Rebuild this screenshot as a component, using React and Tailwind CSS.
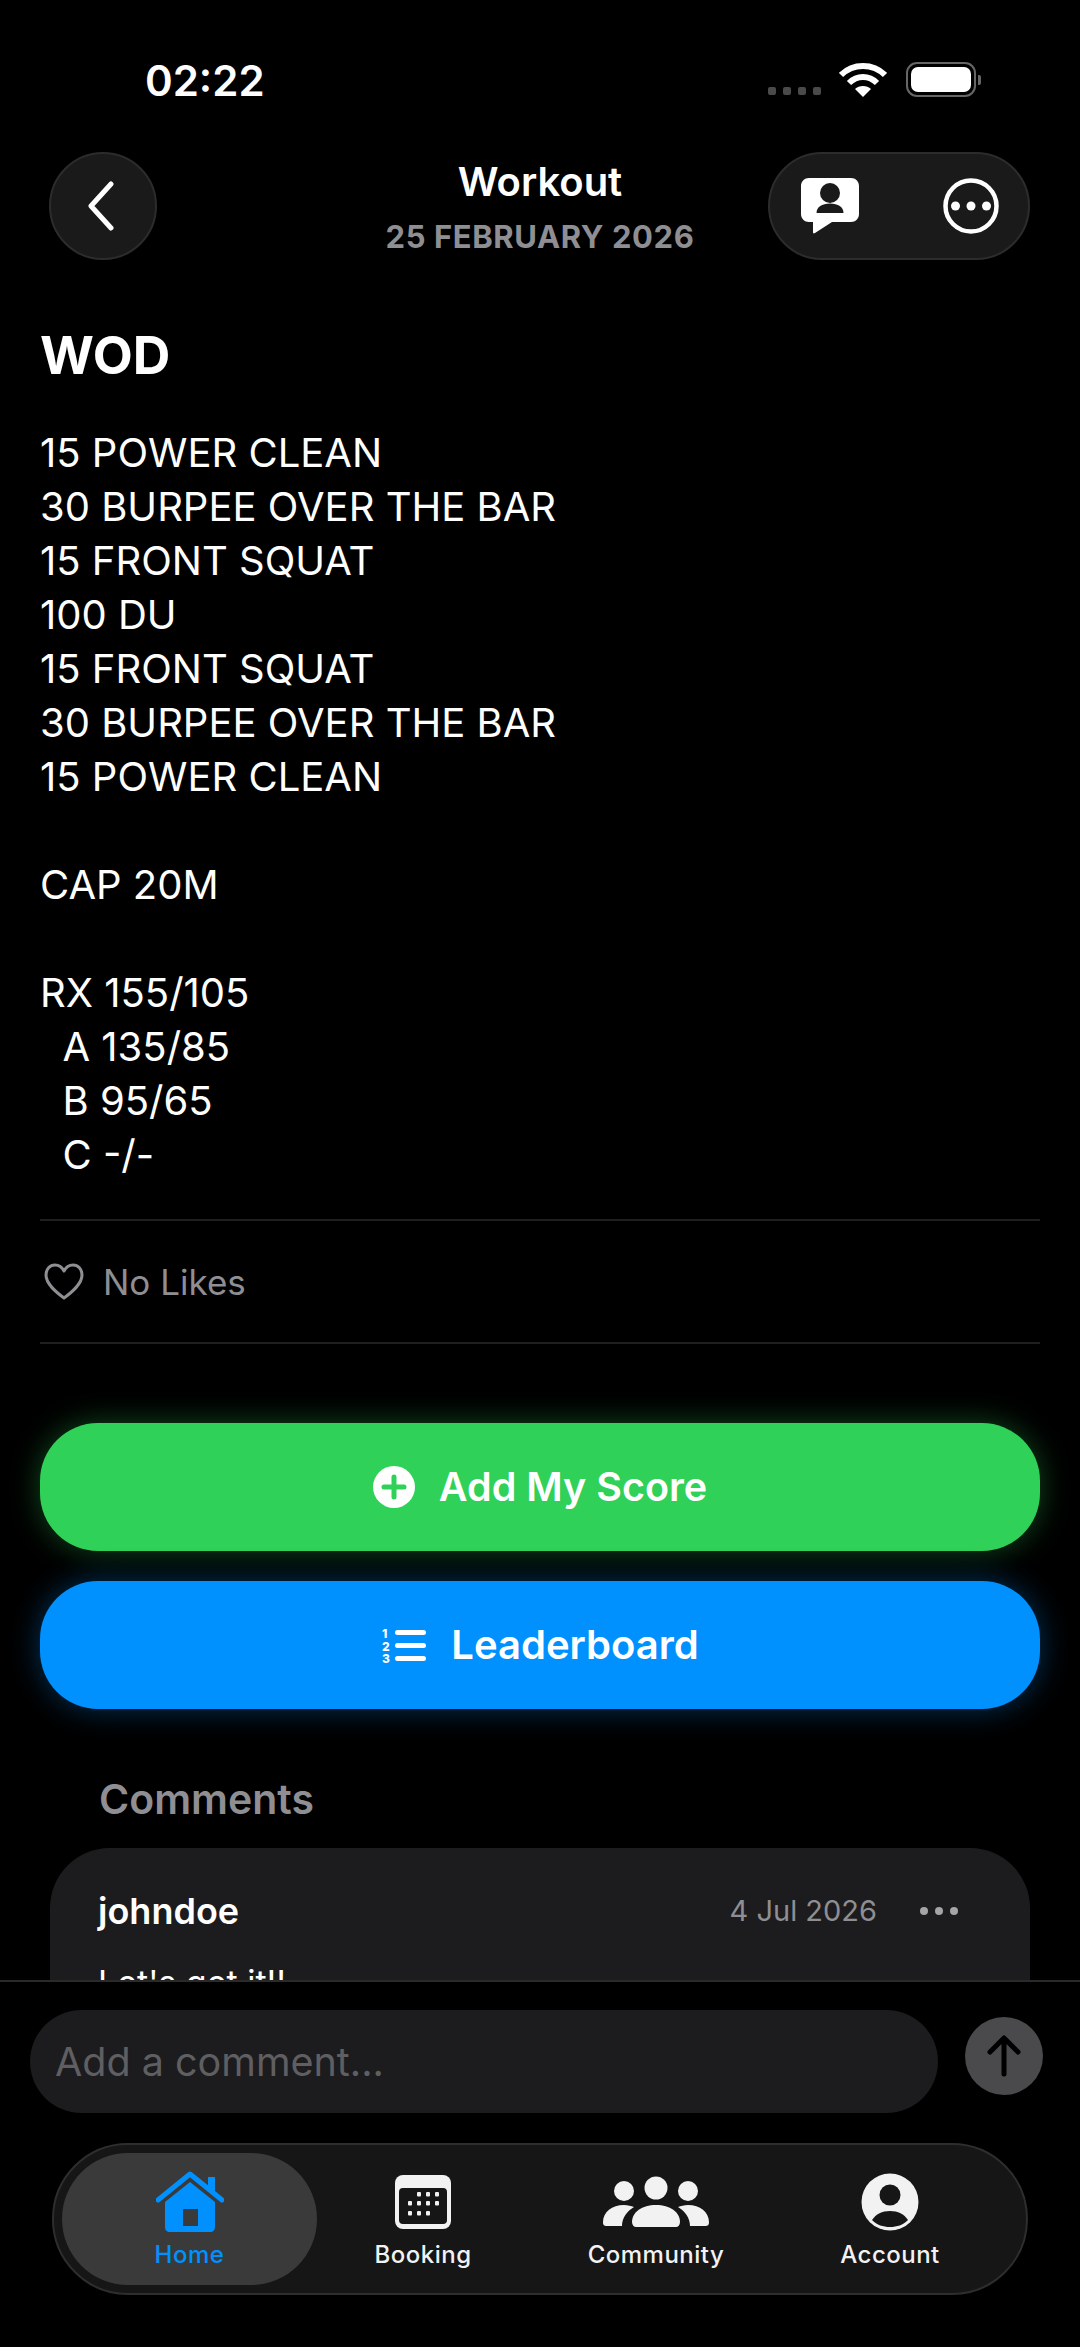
import React from 'react';

const workoutLines = [
  '15 POWER CLEAN',
  '30 BURPEE OVER THE BAR',
  '15 FRONT SQUAT',
  '100 DU',
  '15 FRONT SQUAT',
  '30 BURPEE OVER THE BAR',
  '15 POWER CLEAN',
  '',
  'CAP 20M',
  '',
  'RX 155/105',
  '  A 135/85',
  '  B 95/65',
  '  C -/-',
];

function StatusBar() {
  return (
    <div className="flex h-[152px] shrink-0 items-start justify-between pt-[56px] pl-[145px] pr-[99px]">
      <span className="text-[42px] leading-[50px] font-semibold text-white">02:22</span>
      <div className="flex items-start pt-[6px]">
        <div className="mt-[25px] flex gap-[7px]">
          <span className="h-[8px] w-[8px] rounded-[2px] bg-[#4a4a4a]" />
          <span className="h-[8px] w-[8px] rounded-[2px] bg-[#4a4a4a]" />
          <span className="h-[8px] w-[8px] rounded-[2px] bg-[#4a4a4a]" />
          <span className="h-[8px] w-[8px] rounded-[2px] bg-[#4a4a4a]" />
        </div>
        <svg className="ml-[18px]" width="48" height="35" viewBox="0 0 48 35" fill="none">
          <path d="M2 13C14 1 34 1 46 13" stroke="#fff" strokeWidth="6" />
          <path d="M10 21C18 13 30 13 38 21" stroke="#fff" strokeWidth="6" />
          <path d="M16 27C20 23 28 23 32 27L24 35Z" fill="#fff" />
        </svg>
        <div className="ml-[19px] flex items-center">
          <div className="h-[35px] w-[70px] rounded-[11px] border-[2px] border-[#666] p-[3px]">
            <div className="h-full w-full rounded-[7px] bg-white" />
          </div>
          <div className="ml-[2px] h-[10px] w-[3px] rounded-r-[2px] bg-[#666]" />
        </div>
      </div>
    </div>
  );
}

function Header() {
  return (
    <div className="relative flex h-[108px] shrink-0 items-center justify-between pl-[49px] pr-[50px]">
      <div className="flex h-[108px] w-[108px] items-center justify-center rounded-full border-[2px] border-[#2c2c2c] bg-[#1a1a1a] pr-[4px]">
        <svg width="30" height="50" viewBox="0 0 30 50" fill="none">
          <path d="M25 3L5 25L25 47" stroke="#fff" strokeWidth="5" strokeLinecap="round" strokeLinejoin="round" />
        </svg>
      </div>
      <div className="absolute left-0 right-0 top-0 flex flex-col items-center">
        <span className="text-[40px] leading-[60px] font-semibold text-white">Workout</span>
        <span className="mt-[3px] text-[31px] leading-[44px] font-bold tracking-[0.6px] text-[#8e8e93]">25 FEBRUARY 2026</span>
      </div>
      <div className="flex h-[108px] w-[262px] items-center justify-between rounded-[54px] border-[2px] border-[#2c2c2c] bg-[#1a1a1a] pl-[30px] pr-[29px]">
        <svg width="60" height="58" viewBox="0 0 60 58" fill="none">
          <path d="M9 1H51C55.500 1 59 4.500 59 9V37C59 41.500 55.500 45 51 45H32L15 56C13.500 57 13 56 13 55V45H9C4.500 45 1 41.500 1 37V9C1 4.500 4.500 1 9 1Z" fill="#fff" />
          <circle cx="30" cy="16" r="10" fill="#1a1a1a" />
          <path d="M16.500 36C16.500 30 22 26.500 30 26.500C38 26.500 43.500 30 43.500 36Z" fill="#1a1a1a" />
        </svg>
        <svg width="56" height="56" viewBox="0 0 56 56" fill="none">
          <circle cx="28" cy="28" r="25.500" stroke="#fff" strokeWidth="4.500" />
          <circle cx="12.500" cy="28" r="4.500" fill="#fff" />
          <circle cx="28" cy="28" r="4.500" fill="#fff" />
          <circle cx="43.500" cy="28" r="4.500" fill="#fff" />
        </svg>
      </div>
    </div>
  );
}

function Workout() {
  return (
    <div className="px-[40px]">
      <h1 className="mt-[66px] text-[52px] leading-[60px] font-bold text-white">WOD</h1>
      <div className="mt-[40px] whitespace-pre-wrap text-[40px] leading-[54px] font-normal text-white">
        {workoutLines.map((line, i) => (
          <div key={i} className="h-[54px]">{line}</div>
        ))}
      </div>
      <div className="mt-[37px] flex h-[125px] items-center gap-[19px] border-y-[2px] border-[#1f1f1f] pl-[4px]">
        <svg width="40" height="37" viewBox="0 0 40 37" fill="none">
          <path d="M20 35C12 29 2 21 2 12C2 6 6 2 11 2C15 2 18 4 20 8C22 4 25 2 29 2C34 2 38 6 38 12C38 21 28 29 20 35Z" stroke="#8e8e93" strokeWidth="3" strokeLinejoin="round" />
        </svg>
        <span className="text-[35px] leading-[44px] text-[#8e8e93]">No Likes</span>
      </div>
    </div>
  );
}

function Actions() {
  return (
    <div className="mt-[79px] flex flex-col gap-[30px] px-[40px]">
      <button className="flex h-[128px] items-center justify-center gap-[24px] rounded-[58px] bg-[#30d158] shadow-[0_0_30px_rgba(48,209,88,0.35)]">
        <svg width="42" height="42" viewBox="0 0 42 42">
          <circle cx="21" cy="21" r="21" fill="#fff" />
          <path d="M21 11V31M11 21H31" stroke="#30d158" strokeWidth="5" strokeLinecap="round" />
        </svg>
        <span className="text-[39.5px] leading-[50px] font-semibold text-white">Add My Score</span>
      </button>
      <button className="flex h-[128px] items-center justify-center gap-[24px] rounded-[58px] bg-[#0091ff] shadow-[0_0_30px_rgba(0,145,255,0.35)]">
        <svg width="46" height="40" viewBox="0 0 46 40" fill="#fff">
          <text x="1" y="13" fontFamily="Inter, sans-serif" fontSize="12" fontWeight="800">1</text>
          <text x="1" y="26" fontFamily="Inter, sans-serif" fontSize="12" fontWeight="800">2</text>
          <text x="1" y="38" fontFamily="Inter, sans-serif" fontSize="12" fontWeight="800">3</text>
          <rect x="14" y="5" width="31" height="5" rx="2.500" />
          <rect x="14" y="18" width="31" height="5" rx="2.500" />
          <rect x="14" y="31" width="31" height="5" rx="2.500" />
        </svg>
        <span className="text-[40px] leading-[50px] font-semibold text-white">Leaderboard</span>
      </button>
    </div>
  );
}

function Comments() {
  return (
    <div className="mt-[68px] px-[50px]">
      <h2 className="pl-[49px] text-[41px] leading-[44px] font-semibold text-[#8e8e93]">Comments</h2>
      <div className="mt-[27px] h-[300px] rounded-[60px] bg-[#1c1c1e] pl-[48px] pr-[72px] pt-[40px]">
        <div className="flex items-center justify-between">
          <span className="text-[36px] leading-[46px] font-semibold text-white">johndoe</span>
          <div className="flex items-center gap-[43px]">
            <span className="text-[29px] leading-[46px] text-[#8e8e93]">4 Jul 2026</span>
            <div className="flex gap-[7px]">
              <span className="h-[8px] w-[8px] rounded-full bg-[#a5a5a8]" />
              <span className="h-[8px] w-[8px] rounded-full bg-[#a5a5a8]" />
              <span className="h-[8px] w-[8px] rounded-full bg-[#a5a5a8]" />
            </div>
          </div>
        </div>
        <p className="mt-[27px] text-[34px] leading-[44px] text-white">Let's get it!!</p>
      </div>
    </div>
  );
}

function Composer() {
  return (
    <div className="flex h-[163px] shrink-0 items-start gap-[27px] border-t-[2px] border-[#2a2a2a] bg-black pl-[30px] pr-[37px] pt-[28px]">
      <div className="flex h-[103px] w-[908px] items-center rounded-[52px] bg-[#1c1c1e] pl-[25px]">
        <span className="text-[39.5px] leading-[50px] text-[#5f5f62]">Add a comment...</span>
      </div>
      <div className="mt-[7px] flex h-[78px] w-[78px] shrink-0 items-center justify-center rounded-full bg-[#4a4a4c]">
        <svg width="34" height="42" viewBox="0 0 34 42" fill="none">
          <path d="M17 39V3M3 17L17 3L31 17" stroke="#000" strokeWidth="5" strokeLinecap="round" strokeLinejoin="round" />
        </svg>
      </div>
    </div>
  );
}

function HomeIcon() {
  return (
    <svg width="68" height="62" viewBox="0 0 68 62" fill="none">
      <path d="M2 29L34 3L66 29" stroke="#0091ff" strokeWidth="5" strokeLinecap="round" strokeLinejoin="round" />
      <path d="M52 15V6H59V21Z" fill="#0091ff" />
      <path fillRule="evenodd" clipRule="evenodd" d="M34 11L59 31V56C59 59 57 61 54 61H14C11 61 9 59 9 56V31ZM27 38V55H42V38Z" fill="#0091ff" />
    </svg>
  );
}

function BookingIcon() {
  const dots = [
    [20, 17], [29, 17], [38, 17],
    [11, 26], [20, 26], [29, 26], [38, 26],
    [11, 36], [20, 36], [29, 36],
  ];
  return (
    <svg width="56" height="54" viewBox="0 0 56 54" fill="none">
      <rect width="56" height="54" rx="8" fill="#f2f2f2" />
      <rect x="4" y="13" width="48" height="36" rx="4" fill="#161616" />
      {dots.map(([x, y]) => (
        <rect key={`${x}-${y}`} x={x + 2} y={y} width="4" height="4.500" rx="1" fill="#f2f2f2" />
      ))}
    </svg>
  );
}

function CommunityIcon() {
  return (
    <svg width="106" height="52" viewBox="0 0 106 52" fill="#f2f2f2">
      <circle cx="21" cy="15" r="10" />
      <circle cx="53" cy="12" r="11.500" />
      <circle cx="85" cy="15" r="10" />
      <path d="M0 46C0 36 9 29 21 29C25 29 28 30 31 31C24 35 19 42 19 50H4C1 50 0 49 0 46Z" />
      <path d="M106 46C106 36 97 29 85 29C81 29 78 30 75 31C82 35 87 42 87 50H102C105 50 106 49 106 46Z" />
      <path d="M29 46C29 36 39 29 53 29C67 29 77 36 77 46C77 49 75 51 73 51H33C31 51 29 49 29 46Z" />
    </svg>
  );
}

function AccountIcon() {
  return (
    <svg width="58" height="58" viewBox="0 0 58 58" fill="none">
      <circle cx="29" cy="29" r="28.500" fill="#f2f2f2" />
      <circle cx="29" cy="22" r="10.500" fill="#161616" />
      <path d="M11 47C15 41 21 38 29 38C37 38 43 41 47 47C42 52 36 54 29 54C22 54 16 52 11 47Z" fill="#161616" />
    </svg>
  );
}

function TabItem({ icon, label, width, active }) {
  return (
    <div className={`flex h-[132px] shrink-0 flex-col items-center justify-start pt-[16px] ${width} ${active ? 'rounded-[66px] bg-[#3a3a3a]' : ''}`}>
      <div className="flex h-[66px] items-center justify-center">{icon}</div>
      <span className={`mt-[4px] text-[24px] leading-[32px] font-medium tracking-[0.5px] ${active ? 'text-[#0091ff]' : 'text-[#f2f2f2]'}`}>{label}</span>
    </div>
  );
}

function TabBar() {
  return (
    <div className="mx-[52px] flex h-[152px] shrink-0 items-center rounded-[76px] border-[2px] border-[#2e2e2e] bg-[#161616] px-[8px]">
      <TabItem icon={<HomeIcon />} label="Home" width="w-[255px]" active />
      <TabItem icon={<BookingIcon />} label="Booking" width="w-[232px] -ml-[10px]" />
      <TabItem icon={<CommunityIcon />} label="Community" width="w-[234px]" />
      <TabItem icon={<AccountIcon />} label="Account" width="w-[234px]" />
    </div>
  );
}

export default function App() {
  return (
    <div className="flex h-[2347px] w-[1080px] flex-col overflow-hidden bg-black font-['Inter',sans-serif]">
      <StatusBar />
      <Header />
      <div className="flex-1 overflow-hidden">
        <Workout />
        <Actions />
        <Comments />
      </div>
      <Composer />
      <TabBar />
      <div className="h-[52px] shrink-0" />
    </div>
  );
}
